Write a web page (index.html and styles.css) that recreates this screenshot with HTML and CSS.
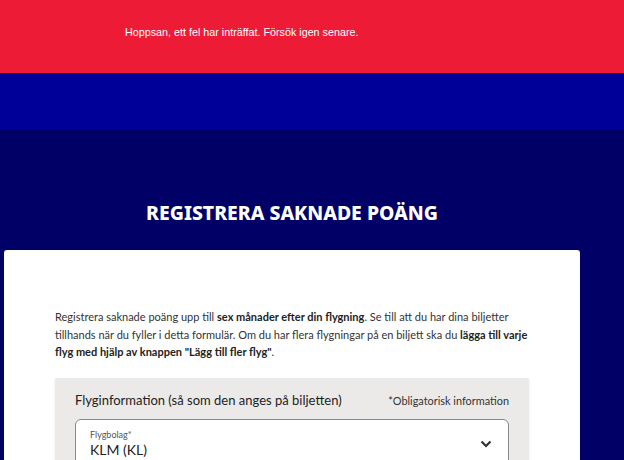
FILE: index.html
```html
<!DOCTYPE html>
<html lang="sv">
<head>
    <meta charset="UTF-8">
    <meta name="viewport" content="width=device-width, initial-scale=1.0">
    <title>Registrera saknade poäng</title>
    <link rel="stylesheet" href="styles.css">
</head>
<body>

    <div class="error-banner">
        <p>Hoppsan, ett fel har inträffat. Försök igen senare.</p>
    </div>

    <div class="top-bar"></div>

    <main class="page">
        <h1 class="page-title">Registrera saknade poäng</h1>

        <div class="card">
            <p class="intro">
                Registrera saknade poäng upp till <strong>sex månader efter din flygning</strong>. Se till att du har dina biljetter<br>
                tillhands när du fyller i detta formulär. Om du har flera flygningar på en biljett ska du <strong>lägga till varje</strong><br>
                <strong>flyg med hjälp av knappen "Lägg till fler flyg"</strong>.
            </p>

            <section class="flight-box">
                <div class="flight-head">
                    <h2>Flyginformation (så som den anges på biljetten)</h2>
                    <span class="required-note">*Obligatorisk information</span>
                </div>

                <div class="select-field">
                    <label for="airline">Flygbolag*</label>
                    <div class="select-value" id="airline">KLM (KL)</div>
                    <svg class="chevron" width="12" height="8" viewBox="0 0 12 8">
                        <path d="M1.5 1.5 L6 6 L10.5 1.5" fill="none" stroke="#333" stroke-width="2.2"/>
                    </svg>
                </div>
            </section>
        </div>
    </main>

</body>
</html>
```

FILE: styles.css
```css
/* General styling */
body {
    font-family: 'Lato', 'Noto Sans', sans-serif;
    margin: 0;
    padding: 0;
    background: #000066;
    color: #333;
    overflow: hidden;
}

.error-banner {
    background-color: #ee1b37;
    height: 73px;
    padding: 0 125px;
    box-sizing: border-box;
}

.error-banner p {
    margin: 0;
    padding-top: 26px;
    font-family: 'Liberation Sans', Arial, sans-serif;
    font-size: 10.75px;
    color: #fff;
}

.top-bar {
    background-color: #000099;
    height: 57px;
}

.page {
    width: 576px;
    margin-left: 4px;
    padding-top: 70px;
}

.page-title {
    margin: 0 0 24px;
    text-align: center;
    text-transform: uppercase;
    font-family: 'Noto Sans', sans-serif;
    font-size: 19.4px;
    font-weight: 800;
    color: #fff;
    line-height: 26px;
}

.card {
    background-color: #fff;
    border-radius: 3px 3px 0 0;
    padding: 58px 51px 40px;
    min-height: 300px;
}

.intro {
    margin: 0 0 17px;
    font-size: 11px;
    line-height: 17.5px;
    color: #333;
    white-space: nowrap;
}

.intro strong {
    font-weight: 700;
    color: #222;
}

.flight-box {
    background-color: #ebeae8;
    box-shadow: 0 1px 3px rgba(0, 0, 0, 0.08);
    padding: 12px 20px 20px;
}

.flight-head {
    display: flex;
    justify-content: space-between;
    align-items: baseline;
    margin-bottom: 9px;
}

.flight-head h2 {
    margin: 0;
    font-size: 13px;
    font-weight: 400;
    line-height: 20px;
    color: #222;
}

.required-note {
    font-size: 10.9px;
    color: #333;
}

.select-field {
    position: relative;
    background-color: #fff;
    border: 1px solid #888;
    border-radius: 6px;
    padding: 9px 14px 8px;
}

.select-field label {
    display: block;
    font-size: 9px;
    color: #555;
    line-height: 12px;
}

.select-value {
    font-size: 14px;
    color: #222;
    line-height: 18px;
}

.chevron {
    position: absolute;
    right: 16px;
    top: 20px;
}
```
